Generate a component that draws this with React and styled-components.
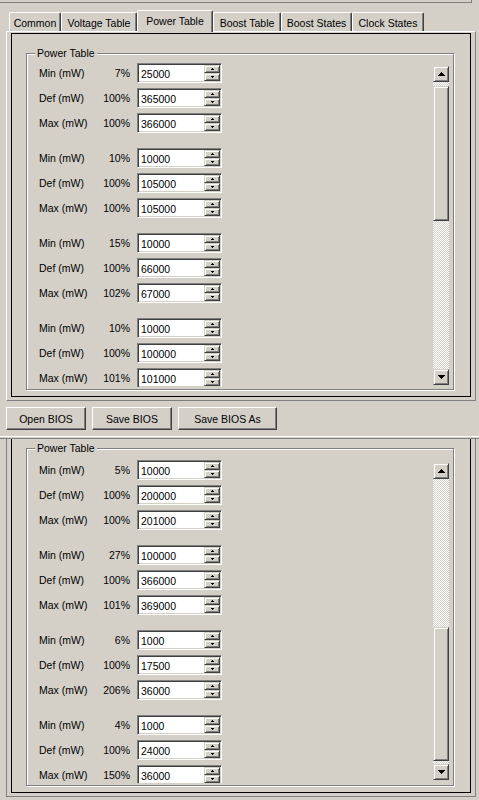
import React from 'react';
import styled, {createGlobalStyle, css} from 'styled-components';

const colors = {
    face: '#d4d0c8',
    light: '#ffffff',
    shadow: '#808080',
    dark: '#404040',
    black: '#000000',
};

const GlobalStyle = createGlobalStyle`
  html, body {
    margin: 0;
    padding: 0;
    background: ${colors.face};
  }
  body {
    font-family: "Liberation Sans", Arial, sans-serif;
    font-size: 10.5px;
    line-height: 12px;
    color: ${colors.black};
  }
  * {
    box-sizing: border-box;
  }
`;

// classic 3d raised edge used by scroll buttons, thumbs and spinners
const raised = css`
  background: ${colors.face};
  border: 1px solid;
  border-color: ${colors.face} ${colors.dark} ${colors.dark} ${colors.face};
  box-shadow: inset 1px 1px 0 ${colors.light}, inset -1px -1px 0 ${colors.shadow};
`;

const checkered = css`
  background-image: conic-gradient(${colors.light} 25%, ${colors.face} 0 50%, ${colors.light} 0 75%, ${colors.face} 0);
  background-size: 2px 2px;
`;

const Window = styled.div`
  width: 479px;
  height: 800px;
  display: flex;
  flex-direction: column;
  overflow: hidden;
`;

const TopEdge = styled.div`
  width: 472px;
  height: 3px;
  flex-shrink: 0;
  border-bottom: 1px solid ${colors.shadow};
  border-right: 1px solid ${colors.shadow};
`;

const TabStrip = styled.div`
  display: flex;
  align-items: flex-end;
  height: 21px;
  flex-shrink: 0;
  margin-top: 7px;
  padding-left: 9px;
  position: relative;
  z-index: 1;
`;

const Tab = styled.div`
  width: ${p => p.$w}px;
  height: ${p => (p.$active ? 22 : 19)}px;
  margin-bottom: ${p => (p.$active ? -1 : 0)}px;
  padding: ${p => (p.$active ? '0 0 1px' : '1px 0 0')};
  display: flex;
  align-items: center;
  justify-content: center;
  white-space: nowrap;
  background: ${colors.face};
  border-top: 1px solid ${colors.light};
  border-left: 1px solid ${colors.light};
  border-right: 1px solid ${colors.dark};
  box-shadow: inset -1px 0 0 ${colors.shadow};
  border-radius: 2px 2px 0 0;
`;

const TabPage = styled.div`
  margin-left: 6px;
  width: 470px;
  height: 370px;
  flex-shrink: 0;
  display: flex;
  padding: 1px 4px 3px 4px;
  border-top: 1px solid ${colors.light};
  border-left: 1px solid ${colors.light};
  border-right: 1px solid ${colors.shadow};
  border-bottom: 1px solid ${colors.shadow};
`;

const SplitEdge = styled.div`
  height: 3px;
  flex-shrink: 0;
  margin-top: 6px;
  border-top: 1px solid ${colors.light};
  border-bottom: 1px solid ${colors.shadow};
`;

const BottomFrame = styled.div`
  margin-left: 6px;
  width: 470px;
  height: 358px;
  flex-shrink: 0;
  display: flex;
  padding: 0 4px 3px 4px;
  border: 1px solid ${colors.shadow};
  border-top: none;
`;

const Sheet = styled.div`
  flex: 1;
  border: 1px solid ${colors.black};
  border-top-width: ${p => (p.$open ? 0 : 1)}px;
  padding: ${p => p.$top}px 0 0 14px;
`;

const GroupBox = styled.div`
  position: relative;
  width: 428px;
  height: ${p => p.$h}px;
  display: flex;
  padding: ${p => p.$padTop}px 4px ${p => p.$padBottom}px 0;
  border: 1px solid ${colors.shadow};
  box-shadow: inset 1px 1px 0 ${colors.light}, 1px 1px 0 ${colors.light};
`;

const Caption = styled.span`
  position: absolute;
  top: -7px;
  left: 8px;
  padding: 0 2px;
  background: ${colors.face};
  white-space: nowrap;
`;

const Viewport = styled.div`
  flex: 1;
  overflow: hidden;
  padding-left: 12px;
  display: flex;
  flex-direction: column;
  gap: 15px;
`;

const RowGroup = styled.div`
  display: flex;
  flex-direction: column;
  gap: 5px;
  flex-shrink: 0;
`;

const Row = styled.div`
  display: grid;
  grid-template-columns: 60px 31px 92px;
  align-items: center;
  height: 20px;
  white-space: nowrap;
`;

const Percent = styled.span`
  text-align: right;
`;

const Edit = styled.div`
  width: 85px;
  height: 20px;
  margin-left: 7px;
  display: flex;
  padding: 1px;
  background: ${colors.light};
  border: 1px solid;
  border-color: ${colors.shadow} ${colors.light} ${colors.light} ${colors.shadow};
  box-shadow: inset 1px 1px 0 ${colors.dark}, inset -1px -1px 0 ${colors.face};
`;

const EditText = styled.span`
  flex: 1;
  padding: 3px 0 0 2px;
`;

const Spin = styled.div`
  width: 16px;
  display: flex;
  flex-direction: column;
`;

const SpinButton = styled.div`
  ${raised};
  flex: 1;
  display: flex;
  align-items: center;
  justify-content: center;
`;

const ScrollBar = styled.div`
  width: 16px;
  height: ${p => p.$h}px;
  margin-top: 3px;
  flex-shrink: 0;
  display: flex;
  flex-direction: column;
`;

const ArrowButton = styled.div`
  ${raised};
  width: 16px;
  height: 16px;
  flex-shrink: 0;
  display: flex;
  align-items: center;
  justify-content: center;
`;

const Track = styled.div`
  ${checkered};
  flex: 1;
  display: flex;
  flex-direction: column;
`;

const Thumb = styled.div`
  ${raised};
  margin-top: ${p => p.$top}px;
  height: ${p => p.$h}px;
`;

const ButtonBar = styled.div`
  display: flex;
  gap: 6px;
  margin: 6px 0 0 6px;
  flex-shrink: 0;
`;

const PushButton = styled.button`
  width: ${p => p.$w}px;
  height: 23px;
  padding: 0;
  font: inherit;
  color: ${colors.black};
  background: ${colors.face};
  border: 1px solid;
  border-color: ${colors.light} ${colors.dark} ${colors.dark} ${colors.light};
  box-shadow: inset -1px -1px 0 ${colors.shadow};
`;

const Arrow = ({down}) => (
    <svg width="7" height="4" viewBox="0 0 7 4" shapeRendering="crispEdges"
         style={{transform: down ? 'scaleY(-1)' : 'none'}}>
        <rect x="3" y="0" width="1" height="1" fill="#000"/>
        <rect x="2" y="1" width="3" height="1" fill="#000"/>
        <rect x="1" y="2" width="5" height="1" fill="#000"/>
        <rect x="0" y="3" width="7" height="1" fill="#000"/>
    </svg>
);

const TinyArrow = ({down}) => (
    <svg width="3" height="2" viewBox="0 0 3 2" shapeRendering="crispEdges"
         style={{transform: down ? 'scaleY(-1)' : 'none'}}>
        <rect x="1" y="0" width="1" height="1" fill="#000"/>
        <rect x="0" y="1" width="3" height="1" fill="#000"/>
    </svg>
);

const tabs = [
    {title: 'Common', w: 52},
    {title: 'Voltage Table', w: 76},
    {title: 'Power Table', w: 76, active: true},
    {title: 'Boost Table', w: 68},
    {title: 'Boost States', w: 71},
    {title: 'Clock States', w: 72},
];

const topTable = [
    [['7%', '25000'], ['100%', '365000'], ['100%', '366000']],
    [['10%', '10000'], ['100%', '105000'], ['100%', '105000']],
    [['15%', '10000'], ['100%', '66000'], ['102%', '67000']],
    [['10%', '10000'], ['100%', '100000'], ['101%', '101000']],
];

const bottomTable = [
    [['5%', '10000'], ['100%', '200000'], ['100%', '201000']],
    [['27%', '100000'], ['100%', '366000'], ['101%', '369000']],
    [['6%', '1000'], ['100%', '17500'], ['206%', '36000']],
    [['4%', '1000'], ['100%', '24000'], ['150%', '36000']],
];

const labels = ['Min (mW)', 'Def (mW)', 'Max (mW)'];

const SpinEdit = ({value}) => (
    <Edit>
        <EditText>{value}</EditText>
        <Spin>
            <SpinButton><TinyArrow/></SpinButton>
            <SpinButton><TinyArrow down/></SpinButton>
        </Spin>
    </Edit>
);

const PowerTable = ({table, h, padTop, padBottom, bar}) => (
    <GroupBox $h={h} $padTop={padTop} $padBottom={padBottom}>
        <Caption>Power Table</Caption>
        <Viewport>
            {table.map((group, gi) => (
                <RowGroup key={gi}>
                    {group.map(([pct, value], ri) => (
                        <Row key={ri}>
                            <span>{labels[ri]}</span>
                            <Percent>{pct}</Percent>
                            <SpinEdit value={value}/>
                        </Row>
                    ))}
                </RowGroup>
            ))}
        </Viewport>
        <ScrollBar $h={bar.h}>
            <ArrowButton><Arrow/></ArrowButton>
            <Track>
                <Thumb $top={bar.thumbTop} $h={bar.thumbH}/>
            </Track>
            <ArrowButton><Arrow down/></ArrowButton>
        </ScrollBar>
    </GroupBox>
);

const App = () => {
    return (
        <Window>
            <GlobalStyle/>
            <TopEdge/>
            <TabStrip>
                {tabs.map(t => (
                    <Tab key={t.title} $w={t.w} $active={t.active}>{t.title}</Tab>
                ))}
            </TabStrip>
            <TabPage>
                <Sheet $top={19}>
                    <PowerTable table={topTable} h={337} padTop={9} padBottom={2}
                                bar={{h: 319, thumbTop: 4, thumbH: 135}}/>
                </Sheet>
            </TabPage>
            <ButtonBar>
                <PushButton $w={80}>Open BIOS</PushButton>
                <PushButton $w={80}>Save BIOS</PushButton>
                <PushButton $w={99}>Save BIOS As</PushButton>
            </ButtonBar>
            <SplitEdge/>
            <BottomFrame>
                <Sheet $open $top={9}>
                    <PowerTable table={bottomTable} h={338} padTop={11} padBottom={2}
                                bar={{h: 317, thumbTop: 148, thumbH: 134}}/>
                </Sheet>
            </BottomFrame>
        </Window>
    );
};

export default App;
